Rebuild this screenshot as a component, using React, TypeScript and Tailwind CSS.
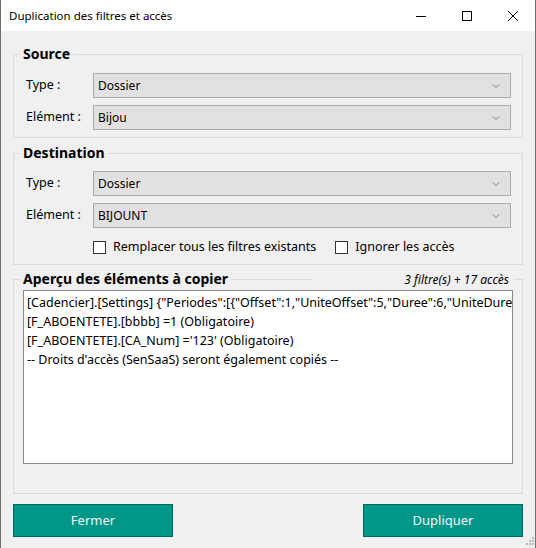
import { ChevronDown } from "lucide-react";

const FONT = { fontFamily: '"Noto Sans", "Open Sans", Arial, sans-serif' };

function Combo({ value }: { value: string }) {
  return (
    <div className="flex h-[25px] flex-1 items-center justify-between border border-[#adadad] bg-[#e1e1e1] pl-[4px] pr-[8px] text-[12px] text-black">
      <span>{value}</span>
      <ChevronDown className="h-[12px] w-[12px] text-[#606060]" strokeWidth={1.5} />
    </div>
  );
}

function Row({ label, value }: { label: string; value: string }) {
  return (
    <div className="flex items-center">
      <span className="w-[67px] shrink-0 text-[12.5px] text-black">{label}</span>
      <Combo value={value} />
    </div>
  );
}

function Check({ label }: { label: string }) {
  return (
    <label className="flex items-center gap-[7px] text-[12.5px] text-black">
      <span className="h-[13px] w-[13px] border border-[#333333] bg-white" />
      {label}
    </label>
  );
}

function Legend({ children }: { children: React.ReactNode }) {
  return (
    <legend className="ml-[6px] px-[3px] text-[14px] font-bold leading-[20px] text-black">{children}</legend>
  );
}

export default function App() {
  const lines = [
    '[Cadencier].[Settings] {"Periodes":[{"Offset":1,"UniteOffset":5,"Duree":6,"UniteDuree":5}]}',
    "[F_ABOENTETE].[bbbb] =1 (Obligatoire)",
    "[F_ABOENTETE].[CA_Num] ='123' (Obligatoire)",
    "-- Droits d'accès (SenSaaS) seront également copiés --",
  ];

  return (
    <div style={FONT} className="relative flex h-[548px] w-[536px] flex-col border-x border-[#6f6f6f] bg-[#f0f0f0]">
      {/* barre de titre */}
      <div className="flex h-[31px] shrink-0 items-center bg-white">
        <span className="flex-1 pl-[8px] text-[11.5px] text-black">Duplication des filtres et accès</span>
        <div className="flex h-full">
          <div className="flex w-[46px] items-center justify-center">
            <svg width="10" height="10" viewBox="0 0 10 10">
              <path d="M0 5.5h10" stroke="#000" strokeWidth="1" />
            </svg>
          </div>
          <div className="flex w-[46px] items-center justify-center">
            <svg width="10" height="10" viewBox="0 0 10 10">
              <rect x="0.5" y="0.5" width="9" height="9" fill="none" stroke="#000" strokeWidth="1" />
            </svg>
          </div>
          <div className="flex w-[45px] items-center justify-center">
            <svg width="10" height="10" viewBox="0 0 10 10">
              <path d="M0 0L10 10M10 0L0 10" stroke="#000" strokeWidth="1" />
            </svg>
          </div>
        </div>
      </div>

      <div className="flex flex-1 flex-col px-[12px]">
        <fieldset className="mt-[13px] min-w-0 border border-[#dcdcdc]">
          <Legend>Source</Legend>
          <div className="flex flex-col gap-[7px] pb-[7px] pl-[12px] pr-[11px] pt-[9px]">
            <Row label="Type :" value="Dossier" />
            <Row label="Elément :" value="Bijou" />
          </div>
        </fieldset>

        <fieldset className="mt-[5px] min-w-0 border border-[#dcdcdc]">
          <Legend>Destination</Legend>
          <div className="pb-[6px] pl-[12px] pr-[11px] pt-[8px]">
            <div className="flex flex-col gap-[7px]">
              <Row label="Type :" value="Dossier" />
              <Row label="Elément :" value="BIJOUNT" />
            </div>
            <div className="mt-[8px] flex h-[22px] items-center gap-[19px] pl-[67px]">
              <Check label="Remplacer tous les filtres existants" />
              <Check label="Ignorer les accès" />
            </div>
          </div>
        </fieldset>

        <fieldset className="relative mt-[4px] min-w-0 border border-[#dcdcdc]">
          <Legend>Aperçu des éléments à copier</Legend>
          <span className="absolute right-[8px] top-[-19px] w-[201px] bg-[#f0f0f0] pr-[5px] text-right text-[12px] italic leading-[20px] text-black">
            3 filtre(s) + 17 accès
          </span>
          <div className="px-[9px] pb-[29px] pt-[1px]">
            <div className="h-[174px] overflow-hidden border border-[#828790] bg-white px-[3px] pt-[2px] text-[12.5px] leading-[19px] text-black">
              {lines.map((l) => (
                <div key={l} className="whitespace-nowrap">
                  {l}
                </div>
              ))}
            </div>
          </div>
        </fieldset>

        <div className="mt-[10px] flex justify-between">
          <button className="h-[33px] w-[160px] border border-[#00695c] bg-[#009688] text-[13px] text-[#eef8f7]">
            Fermer
          </button>
          <button className="h-[33px] w-[160px] border border-[#00695c] bg-[#009688] text-[13px] text-[#eef8f7]">
            Dupliquer
          </button>
        </div>
      </div>

      {/* poignée de redimensionnement */}
      <svg className="absolute bottom-[3px] right-[1px]" width="9" height="9" viewBox="0 0 9 9">
        <rect x="7" y="1" width="2" height="2" fill="#b8b8b8" />
        <rect x="4" y="4" width="2" height="2" fill="#b8b8b8" />
        <rect x="7" y="4" width="2" height="2" fill="#b8b8b8" />
        <rect x="1" y="7" width="2" height="2" fill="#b8b8b8" />
        <rect x="4" y="7" width="2" height="2" fill="#b8b8b8" />
        <rect x="7" y="7" width="2" height="2" fill="#b8b8b8" />
      </svg>
    </div>
  );
}
